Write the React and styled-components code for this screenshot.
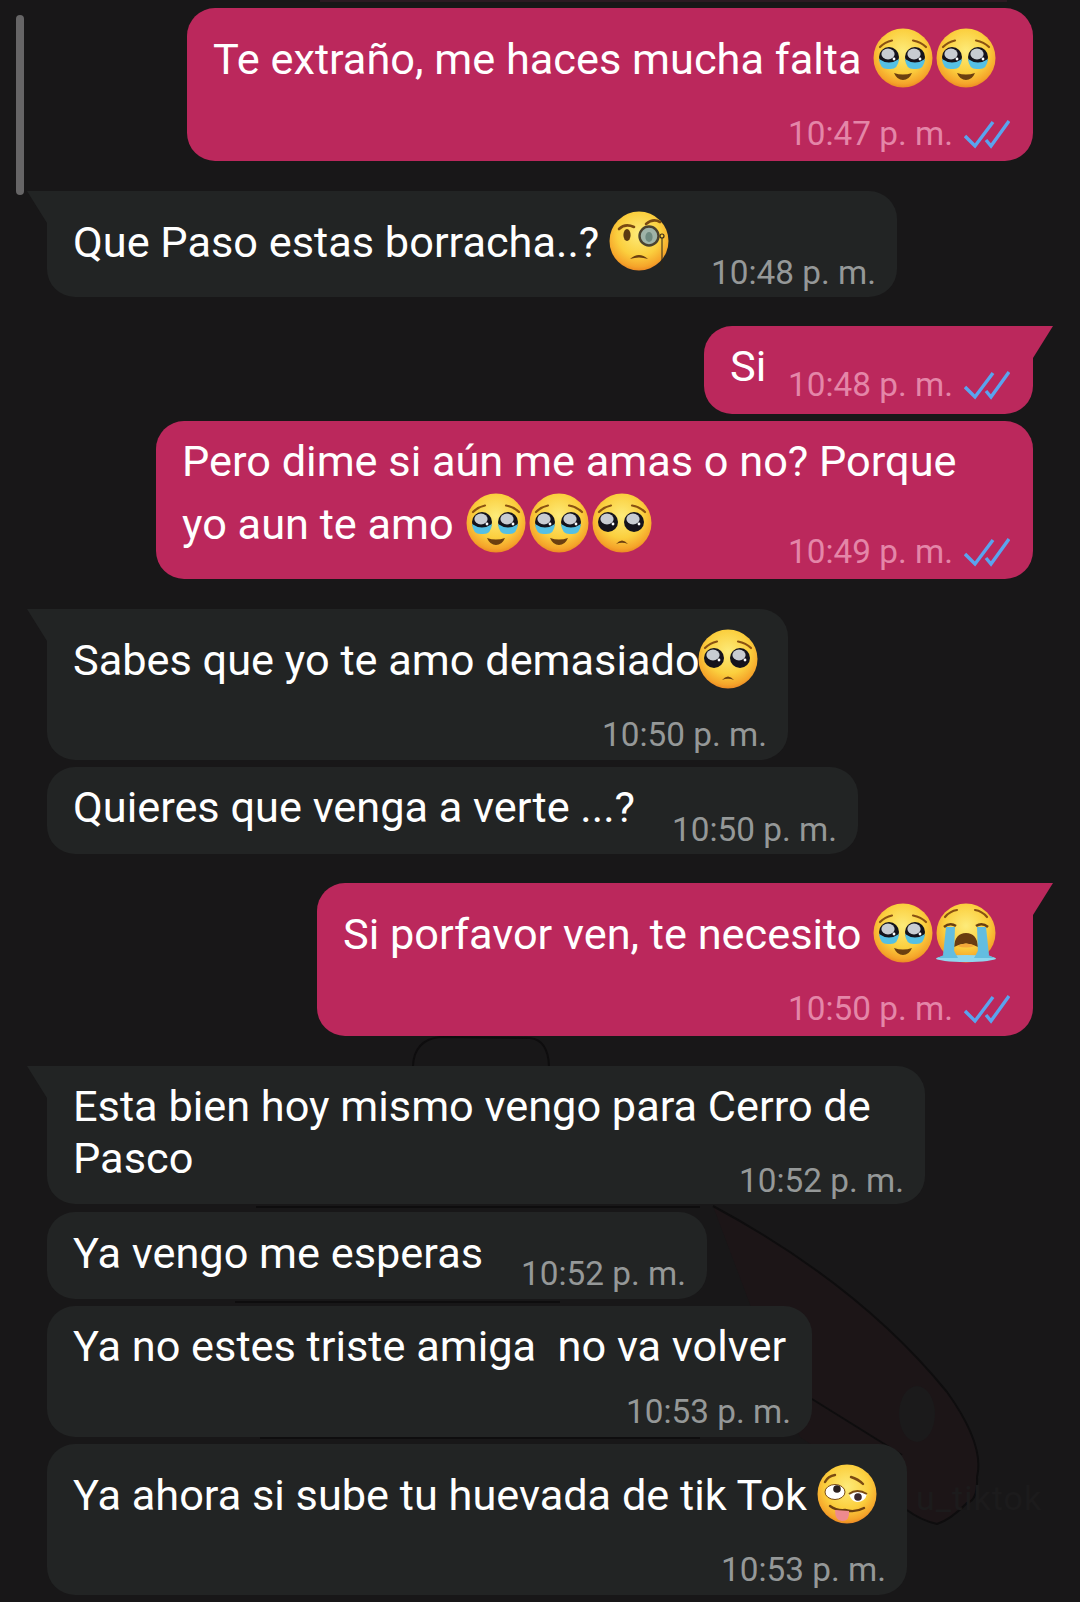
import React, { useId } from "react";
import styled, { createGlobalStyle } from "styled-components";

const Global = createGlobalStyle`
  html, body { margin: 0; padding: 0; background: #181718; }
  * { box-sizing: border-box; }
`;

const Screen = styled.div`
  position: relative;
  width: 1080px;
  height: 1602px;
  overflow: hidden;
  background: #181718;
  font-family: Roboto, "Liberation Sans", sans-serif;
`;

const Wallpaper = styled.svg`
  position: absolute;
  left: 0;
  top: 0;
`;

const Watermark = styled.span`
  position: absolute;
  left: 916px;
  top: 1478px;
  font-size: 34px;
  letter-spacing: 1px;
  color: #1c1b1c;
  white-space: nowrap;
`;

const Scrollbar = styled.div`
  position: absolute;
  left: 16px;
  top: 15px;
  width: 8px;
  height: 180px;
  border-radius: 4px;
  background: #666566;
`;

const PrevEdge = styled.div`
  position: absolute;
  left: 320px;
  top: 0;
  width: 687px;
  height: 2px;
  background: #2c1a22;
`;

const Chat = styled.div`
  position: relative;
  display: flex;
  flex-direction: column;
  align-items: flex-start;
  padding: 8px 47px 0;
`;

const Bubble = styled.div`
  position: relative;
  width: ${(p) => p.$w}px;
  height: ${(p) => p.$h}px;
  margin-top: ${(p) => p.$gap || 0}px;
  align-self: ${(p) => (p.$out ? "flex-end" : "flex-start")};
  padding: ${(p) => p.$top}px 26px 0 26px;
  border-radius: 28px;
  background: ${(p) => (p.$out ? "#bb285c" : "#222424")};
  color: #fff;
  font-size: 43.3px;
  line-height: ${(p) => p.$lh || 60}px;
  white-space: nowrap;
  ${(p) => p.$tail && !p.$out && "border-top-left-radius: 0;"}
  ${(p) => p.$tail && p.$out && "border-top-right-radius: 0;"}

  &::before {
    content: ${(p) => (p.$tail ? '""' : "none")};
    position: absolute;
    top: 0;
    width: 20px;
    height: 32px;
    background: ${(p) => (p.$out ? "#bb285c" : "#222424")};
    ${(p) =>
      p.$out
        ? "right: -20px; clip-path: polygon(0 0, 100% 0, 0 100%);"
        : "left: -20px; clip-path: polygon(0 0, 100% 0, 100% 100%);"}
  }
`;

const Text = styled.div``;

const Meta = styled.div`
  position: absolute;
  right: ${(p) => (p.$out ? 23 : 21)}px;
  bottom: ${(p) => p.$bottom || (p.$out ? 7 : 5)}px;
  display: flex;
  align-items: center;
  gap: 11px;
  font-size: 33.3px;
  line-height: 40px;
  color: ${(p) => (p.$out ? "#e486a8" : "#959898")};
`;

const EmojiWrap = styled.svg`
  display: inline-block;
  width: 60px;
  height: 60px;
  margin: 0 2px 0 ${(p) => p.$ml ?? 1}px;
  vertical-align: -14px;
`;

const Checks = () => (
  <svg width="46" height="30" viewBox="0 0 46 30" fill="none" stroke="#5aa4ee" strokeWidth="3.4">
    <path d="M1 17 L11 27 L29 3" />
    <path d="M22 21 L27 27 L45 2" />
  </svg>
);

// shared yellow face, eyes get drawn on top of it
const Face = ({ children, ml }) => {
  const id = useId();
  return (
    <EmojiWrap viewBox="0 0 60 60" $ml={ml}>
      <defs>
        <radialGradient id={id} cx="50%" cy="38%" r="62%">
          <stop offset="0%" stopColor="#fdeb7a" />
          <stop offset="60%" stopColor="#fbcf3e" />
          <stop offset="90%" stopColor="#f5a42a" />
          <stop offset="100%" stopColor="#ec8a24" />
        </radialGradient>
      </defs>
      <circle cx="30" cy="30" r="29.5" fill={`url(#${id})`} />
      {children}
    </EmojiWrap>
  );
};

const PleadEye = ({ x, tear }) => (
  <g>
    <circle cx={x} cy="29" r="10" fill="#14131c" />
    <ellipse cx={x - 1} cy="26" rx="6.6" ry="5.4" fill="#c8ccd2" />
    <circle cx={x + 5} cy="31" r="1.4" fill="#fff" />
    {tear && <path d={`M${x - 10} 31 Q${x} 38 ${x + 10} 31 Q${x + 9} 42 ${x} 41 Q${x - 9} 42 ${x - 10} 31 Z`} fill="#55c0e4" />}
  </g>
);

const Plead = ({ tear, ml }) => (
  <Face ml={ml}>
    <path d="M7 19 Q12 14 19 12.5" stroke="#8a5212" strokeWidth="2.2" fill="none" strokeLinecap="round" />
    <path d="M53 19 Q48 14 40 12.5" stroke="#8a5212" strokeWidth="2.2" fill="none" strokeLinecap="round" />
    <PleadEye x={16} tear={tear} />
    <PleadEye x={42} tear={tear} />
    {tear ? (
      <path d="M21 45 Q30 48 39 45 Q36 52 30 52 Q24 52 21 45 Z" fill="#6b3f10" />
    ) : (
      <path d="M24 51 Q30 44 36 51 Q30 48.5 24 51 Z" fill="#6b3f10" />
    )}
  </Face>
);

const Monocle = () => (
  <Face ml={-1}>
    <path d="M10 18 Q16 12 25 16" stroke="#7a4a12" strokeWidth="2.6" fill="none" strokeLinecap="round" />
    <path d="M37 13 Q44 7 51 11" stroke="#7a4a12" strokeWidth="2.6" fill="none" strokeLinecap="round" />
    <ellipse cx="18" cy="24" rx="3.6" ry="6" fill="#5b3a12" />
    <circle cx="40" cy="25" r="9.5" fill="#9fb3a8" stroke="#4a4230" strokeWidth="2.4" />
    <ellipse cx="40" cy="26" rx="3.6" ry="5" fill="#6f8a80" />
    <circle cx="53" cy="25" r="2" fill="none" stroke="#3a2c18" strokeWidth="1.2" />
    <path d="M53 27 L53 58" stroke="#2a2418" strokeWidth="1" />
    <path d="M21 48 Q30 40 39 48 Q30 45 21 48 Z" fill="#6b3f10" />
  </Face>
);

const Crying = () => (
  <Face>
    <path d="M9 14 Q14 8 21 7" stroke="#8a5212" strokeWidth="2.2" fill="none" strokeLinecap="round" />
    <path d="M51 14 Q46 8 39 7" stroke="#8a5212" strokeWidth="2.2" fill="none" strokeLinecap="round" />
    <path d="M8 24 Q14 19 20 23" stroke="#6b3f10" strokeWidth="2.6" fill="none" />
    <path d="M52 24 Q46 19 40 23" stroke="#6b3f10" strokeWidth="2.6" fill="none" />
    <path d="M18 44 Q19 30 30 30 Q41 30 42 44 Q30 37 18 44 Z" fill="#6a3c10" />
    <path d="M21 43 Q30 38 39 43 Q30 46 21 43 Z" fill="#f5a83a" />
    <path d="M10 24 L19 24 L18 52 L7 52 Z" fill="#63bde0" />
    <path d="M41 24 L50 24 L53 52 L42 52 Z" fill="#63bde0" />
    <ellipse cx="30" cy="55.5" rx="30" ry="3.5" fill="#8fd6ee" />
    <path d="M2 55 Q10 51 17 46 L22 55 Z" fill="#63bde0" />
    <path d="M58 55 Q50 51 43 46 L38 55 Z" fill="#63bde0" />
  </Face>
);

const Woozy = () => (
  <Face ml={-1}>
    <path d="M8 18 Q11 12 18 11" stroke="#7a4a12" strokeWidth="2.4" fill="none" strokeLinecap="round" />
    <path d="M34 13 Q41 15 46 20" stroke="#7a4a12" strokeWidth="2.4" fill="none" strokeLinecap="round" />
    <ellipse cx="18" cy="28" rx="10" ry="7.5" fill="#fff" stroke="#7a4a12" strokeWidth="1" />
    <circle cx="20" cy="25" r="3.8" fill="#2a2020" />
    <path d="M32 30 Q40 24 50 30 Q48 38 40 38 Q34 37 32 30 Z" fill="#fff" />
    <path d="M32 30 Q40 24 50 30" stroke="#7a4a12" strokeWidth="2" fill="none" />
    <circle cx="41" cy="33" r="3.8" fill="#3a2830" />
    <path d="M13 42 Q20 47 28 46 Q38 49 47 44" stroke="#6b3f10" strokeWidth="2.4" fill="none" strokeLinecap="round" />
    <path d="M18 46 L32 47 Q33 57 25 57 Q18 57 18 46 Z" fill="#ee8a8e" />
  </Face>
);

export default function App() {
  return (
    <Screen>
      <Global />
      <Wallpaper width="1080" height="1602" viewBox="0 0 1080 1602" fill="none">
        <path d="M713 1206 Q860 1285 947 1392 Q985 1445 977 1477 Q978 1500 967 1503 Q950 1520 937 1524 Q920 1520 907 1510 L800 1437 Z" fill="#1c1517" />
        <path d="M713 1206 Q860 1285 947 1392 Q985 1445 977 1477 Q978 1500 967 1503 Q950 1520 937 1524 Q920 1520 907 1510" stroke="#0e0d0e" strokeWidth="2" />
        <path d="M812 1399 L902 1455" stroke="#0e0d0e" strokeWidth="2" />
        <path d="M413 1066 Q414 1040 440 1037 L530 1038 Q548 1040 549 1066" stroke="#0e0d0e" strokeWidth="2" />
        <ellipse cx="917" cy="1414" rx="18" ry="28" fill="#1b1a1b" />
        <path d="M256 1207 L700 1207 M235 1302 L560 1302 M260 1438 L700 1438" stroke="#0e0d0e" strokeWidth="2" />
      </Wallpaper>
      <Watermark>u_tiktok</Watermark>
      <PrevEdge />
      <Chat>
        <Bubble $out $w={846} $h={153} $top={20}>
          <Text>Te extraño, me haces mucha falta <Plead tear /><Plead tear /></Text>
          <Meta $out>10:47 p. m. <Checks /></Meta>
        </Bubble>
        <Bubble $tail $w={850} $h={106} $gap={30} $top={20}>
          <Text>Que Paso estas borracha..? <Monocle /></Text>
          <Meta $bottom={4}>10:48 p. m.</Meta>
        </Bubble>
        <Bubble $out $tail $w={329} $h={88} $gap={29} $top={11}>
          <Text>Si</Text>
          <Meta $out $bottom={9}>10:48 p. m. <Checks /></Meta>
        </Bubble>
        <Bubble $out $w={877} $h={158} $gap={7} $top={10} $lh={62}>
          <Text>Pero dime si aún me amas o no? Porque</Text>
          <Text>yo aun te amo <Plead tear /><Plead tear /><Plead /></Text>
          <Meta $out>10:49 p. m. <Checks /></Meta>
        </Bubble>
        <Bubble $tail $w={741} $h={151} $gap={30} $top={20}>
          <Text>Sabes que yo te amo demasiado<Plead ml={-2} /></Text>
          <Meta>10:50 p. m.</Meta>
        </Bubble>
        <Bubble $w={811} $h={87} $gap={7} $top={11}>
          <Text>Quieres que venga a verte ...?</Text>
          <Meta $bottom={4}>10:50 p. m.</Meta>
        </Bubble>
        <Bubble $out $tail $w={716} $h={153} $gap={29} $top={20}>
          <Text>Si porfavor ven, te necesito <Plead tear /><Crying /></Text>
          <Meta $out>10:50 p. m. <Checks /></Meta>
        </Bubble>
        <Bubble $tail $w={878} $h={138} $gap={30} $top={15} $lh={52}>
          <Text>Esta bien hoy mismo vengo para Cerro de</Text>
          <Text>Pasco</Text>
          <Meta $bottom={3}>10:52 p. m.</Meta>
        </Bubble>
        <Bubble $w={660} $h={87} $gap={8} $top={12}>
          <Text>Ya vengo me esperas</Text>
          <Meta>10:52 p. m.</Meta>
        </Bubble>
        <Bubble $w={765} $h={131} $gap={7} $top={11}>
          <Text>Ya no estes triste amiga&nbsp; no va volver</Text>
          <Meta>10:53 p. m.</Meta>
        </Bubble>
        <Bubble $w={860} $h={151} $gap={7} $top={20}>
          <Text>Ya ahora si sube tu huevada de tik Tok <Woozy /></Text>
          <Meta>10:53 p. m.</Meta>
        </Bubble>
      </Chat>
      <Scrollbar />
    </Screen>
  );
}
